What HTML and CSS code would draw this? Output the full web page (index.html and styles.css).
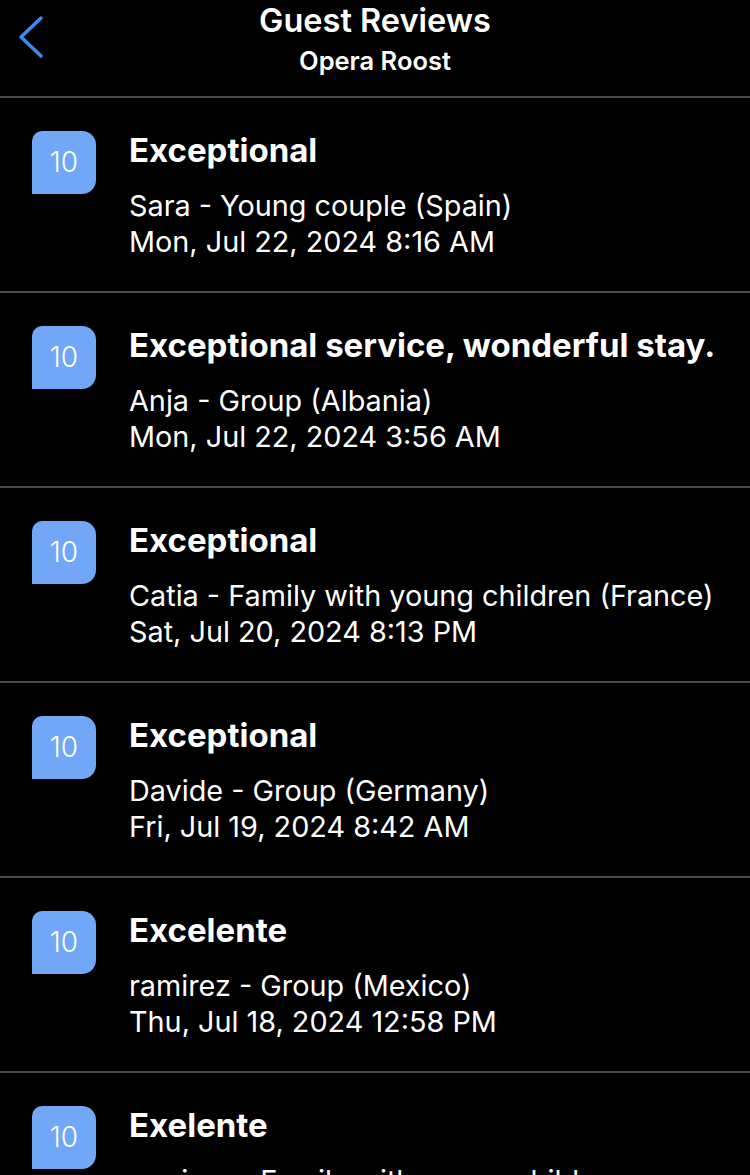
FILE: index.html
```html
<!DOCTYPE html>
<html>
<head lang="en">
	<meta charset="UTF-8">
	<title>Guest Reviews</title>
	<link rel="stylesheet" href="styles.css">
</head>
<body>
	<div id="header">
		<span class="back">
			<svg width="30" height="44" viewBox="0 0 30 44"><path d="M25 3 L5 22 L25 41" fill="none" stroke="#3d8bf2" stroke-width="3.5" stroke-linecap="round" stroke-linejoin="round"/></svg>
		</span>
		<div class="title">Guest Reviews</div>
		<div class="subtitle">Opera Roost</div>
	</div>
	<ul id="reviews">
		<li class="review">
			<div class="score">10</div>
			<div class="info">
				<div class="headline">Exceptional</div>
				<div class="line">Sara - Young couple (Spain)</div>
				<div class="line">Mon, Jul 22, 2024 8:16 AM</div>
			</div>
		</li>
		<li class="review">
			<div class="score">10</div>
			<div class="info">
				<div class="headline">Exceptional service, wonderful stay.</div>
				<div class="line">Anja - Group (Albania)</div>
				<div class="line">Mon, Jul 22, 2024 3:56 AM</div>
			</div>
		</li>
		<li class="review">
			<div class="score">10</div>
			<div class="info">
				<div class="headline">Exceptional</div>
				<div class="line">Catia - Family with young children (France)</div>
				<div class="line">Sat, Jul 20, 2024 8:13 PM</div>
			</div>
		</li>
		<li class="review">
			<div class="score">10</div>
			<div class="info">
				<div class="headline">Exceptional</div>
				<div class="line">Davide - Group (Germany)</div>
				<div class="line">Fri, Jul 19, 2024 8:42 AM</div>
			</div>
		</li>
		<li class="review">
			<div class="score">10</div>
			<div class="info">
				<div class="headline">Excelente</div>
				<div class="line">ramirez - Group (Mexico)</div>
				<div class="line">Thu, Jul 18, 2024 12:58 PM</div>
			</div>
		</li>
		<li class="review">
			<div class="score">10</div>
			<div class="info">
				<div class="headline">Exelente</div>
				<div class="line">ramirez - Family with young children</div>
				<div class="line">Thu, Jul 18, 2024 9:10 AM</div>
			</div>
		</li>
	</ul>
</body>
</html>
```

FILE: styles.css
```css
*{
	margin: 0;
	padding: 0;
}
ul{
	list-style: none;
}
html,body{
	background: #000;
	height: 1175px;
	overflow: hidden;
}
body{
	color: #fff;
	font-family: Inter, "Noto Sans", sans-serif;
}
#header{
	position: relative;
	height: 96px;
	border-bottom: 2px solid #4a4a4a;
	text-align: center;
}
#header .back{
	position: absolute;
	left: 16px;
	top: 15px;
}
#header .title{
	font-size: 32.5px;
	font-weight: 600;
	line-height: 38px;
	padding-top: 2px;
}
#header .subtitle{
	font-size: 25.5px;
	font-weight: 600;
	line-height: 30px;
	padding-top: 6px;
}
.review{
	display: flex;
	height: 193px;
	border-bottom: 2px solid #4a4a4a;
	padding: 0 0 0 32px;
}
.score{
	flex: none;
	width: 64px;
	height: 63px;
	margin-top: 33px;
	background: #72a7f7;
	border-radius: 10px 14px 14px 0;
	font-size: 28px;
	font-weight: 300;
	line-height: 63px;
	text-align: center;
	color: #fff;
}
.info{
	margin-left: 33px;
	padding-top: 32px;
}
.headline{
	font-size: 33px;
	font-weight: 700;
	line-height: 40px;
	margin-bottom: 18px;
}
.line{
	font-size: 28.8px;
	line-height: 36px;
	white-space: nowrap;
}
```
